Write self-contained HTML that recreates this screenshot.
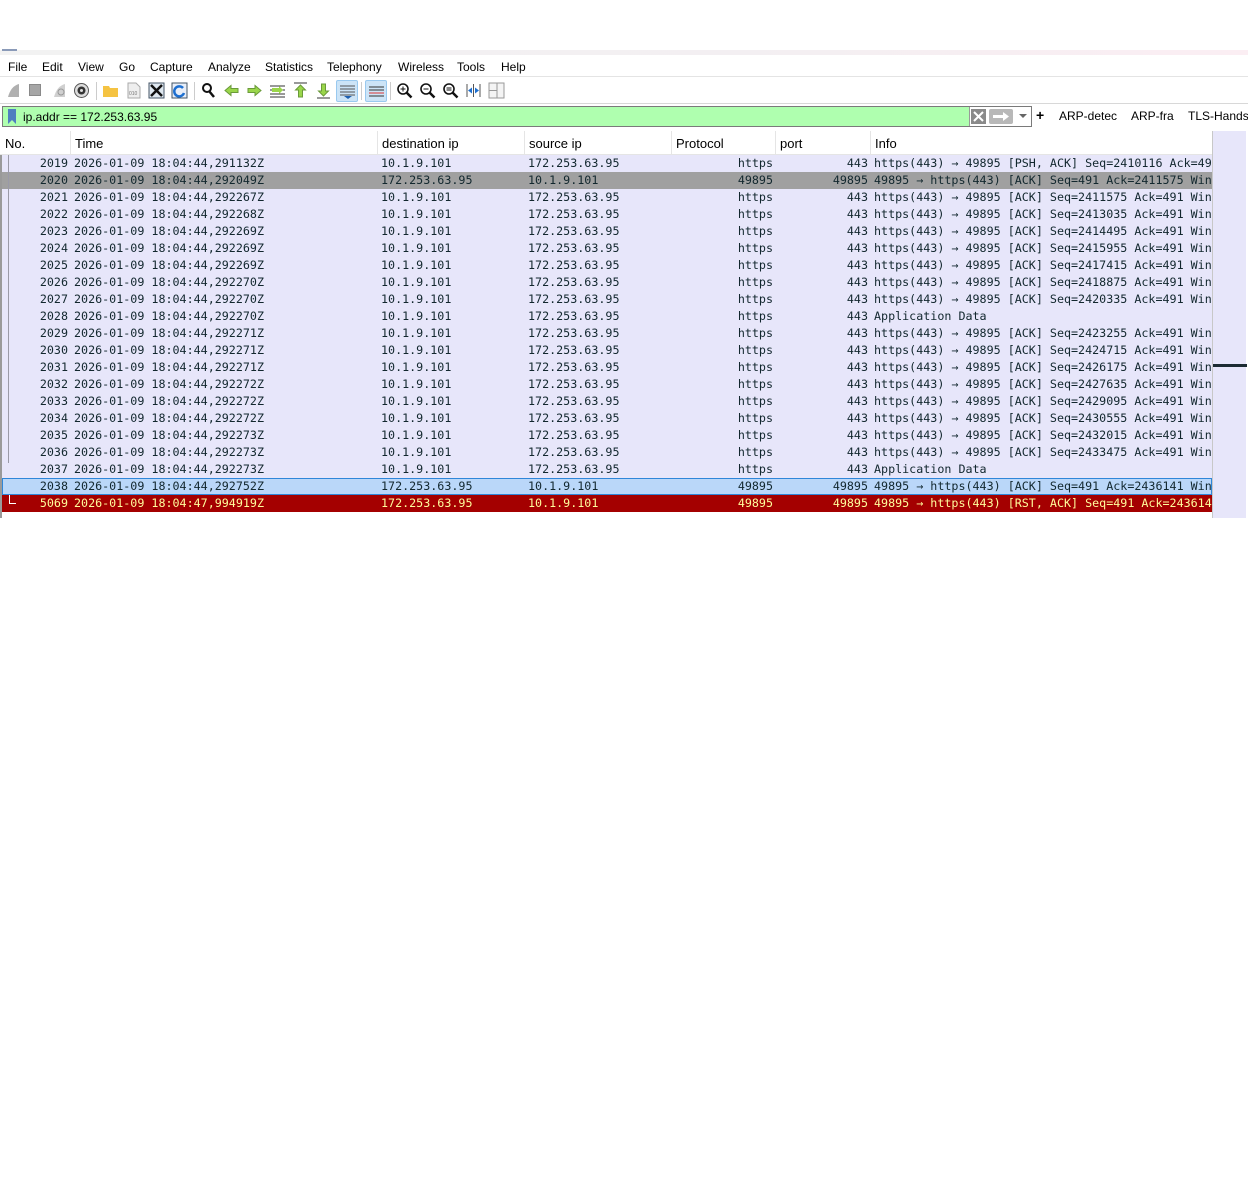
<!DOCTYPE html>
<html><head><meta charset="utf-8"><style>
*{margin:0;padding:0;box-sizing:border-box}
body{width:1248px;height:1203px;background:#fff;position:relative;overflow:hidden;font-family:"Liberation Sans","DejaVu Sans",sans-serif;font-size:12px;color:#000}
.abs{position:absolute}
#strip{left:0;top:50px;width:1248px;height:5px;background:linear-gradient(90deg,#f2f2f2,#f3eff2 60%,#fbeef3)}
#menu{left:0;top:56px;width:1248px;height:21px;background:#fff;border-bottom:1px solid #e4e4e4}
#menu span{position:absolute;top:4px;font-size:12px}
#tb{left:0;top:78px;width:1248px;height:26px;background:#fff;border-bottom:1px solid #d8d8d8}
.ic{position:absolute;top:4px;width:17px;height:17px}
.hl{position:absolute;top:2px;width:22px;height:22px;background:#cce4f7;border:1px solid #99c9ef;border-radius:2px}
#filter{left:2px;top:106px;width:1030px;height:21px;border:1px solid #7a7a7a;background:#afffaf}
#filter .t{position:absolute;left:20px;top:3px;font-size:12px}
#rb{left:1040px;top:109px;font-size:12px}
#hdr{left:0;top:131px;width:1212px;height:24px;background:#fff;border-bottom:1px solid #e5e5e5}
#hdr span{position:absolute;top:5px;font-size:13px}
.sep{position:absolute;top:0;width:1px;height:24px;background:#e5e5e5}
#list{left:0;top:155px;width:1212px;height:363px;border-left:2px solid #9a9a9a}
.r{position:absolute;left:0;width:1210px;height:17px;font-family:"DejaVu Sans Mono","Liberation Mono",monospace;font-size:11.7px;line-height:17px;white-space:nowrap;overflow:hidden;color:#12272e;background:#e7e6fa}
.r span{position:absolute;top:0;overflow:hidden}
.g{background:#a0a0a0;color:#12272e}
.s{background:#bad7f9;border:1px solid #2f86d9;line-height:15px}
.x{background:#a40000;color:#fffc9c}
#mm{left:1212px;top:131px;width:34px;height:387px;background:#e7e6fa;border-left:1px solid #c8c8c8}
</style></head><body>
<div class="abs" id="strip"></div>
<div class="abs" style="left:2px;top:49px;width:15px;height:2px;background:#8a9ab8"></div>
<div class="abs" id="menu">
<span style="left:8px">File</span><span style="left:42px">Edit</span><span style="left:78px">View</span><span style="left:119px">Go</span><span style="left:150px">Capture</span><span style="left:208px">Analyze</span><span style="left:265px">Statistics</span><span style="left:327px">Telephony</span><span style="left:398px">Wireless</span><span style="left:457px">Tools</span><span style="left:501px">Help</span>
</div>
<div class="abs" id="tb">
<svg class="ic" style="left:5px" viewBox="0 0 17 17"><path d="M3 15 L14 15 L14 2 Q6 4 3 15Z" fill="#b0b0b0"/></svg>
<div class="ic" style="left:29px;top:6px;width:12px;height:12px;background:#a6a6a6;border:1px solid #8a8a8a"></div>
<svg class="ic" style="left:51px" viewBox="0 0 17 17"><path d="M3 15 L14 15 L14 2 Q6 4 3 15Z" fill="#d0d0d0"/><circle cx="10" cy="10" r="3" fill="none" stroke="#999"/></svg>
<svg class="ic" style="left:73px" viewBox="0 0 17 17"><circle cx="8.5" cy="8.5" r="7" fill="#ddd" stroke="#555"/><circle cx="8.5" cy="8.5" r="4" fill="#333"/><circle cx="8.5" cy="8.5" r="1.5" fill="#ddd"/></svg>
<div class="abs" style="left:96px;top:4px;width:1px;height:18px;background:#ccc"></div>
<svg class="ic" style="left:102px" viewBox="0 0 17 17"><path d="M1 4h6l1 2h8v9H1z" fill="#f5c342"/></svg>
<svg class="ic" style="left:125px" viewBox="0 0 17 17"><path d="M3 1h8l4 4v11H3z" fill="#eee" stroke="#aaa"/><text x="4" y="13" font-size="5" fill="#777">010</text></svg>
<svg class="ic" style="left:148px" viewBox="0 0 17 17"><rect x="1" y="1" width="15" height="15" fill="#dfe8f0" stroke="#456"/><path d="M3 3L14 14M14 3L3 14" stroke="#111" stroke-width="2.5"/></svg>
<svg class="ic" style="left:171px" viewBox="0 0 17 17"><rect x="1" y="1" width="15" height="15" fill="#e8eef8" stroke="#456"/><path d="M12 6a5 5 0 1 0 1 5" fill="none" stroke="#1d6fd0" stroke-width="2.5"/></svg>
<div class="abs" style="left:194px;top:4px;width:1px;height:18px;background:#ccc"></div>
<svg class="ic" style="left:200px" viewBox="0 0 17 17"><circle cx="7" cy="6" r="4" fill="none" stroke="#111" stroke-width="2"/><path d="M9 9l5 6" stroke="#111" stroke-width="2.5"/></svg>
<svg class="ic" style="left:223px" viewBox="0 0 17 17"><path d="M2 8.5l6-5v3h7v4H8v3z" fill="#9ad64a" stroke="#6a9a3a"/></svg>
<svg class="ic" style="left:246px" viewBox="0 0 17 17"><path d="M15 8.5l-6-5v3H2v4h7v3z" fill="#9ad64a" stroke="#6a9a3a"/></svg>
<svg class="ic" style="left:269px" viewBox="0 0 17 17"><path d="M1 4h15M1 8h15M1 12h15M1 15h15" stroke="#333"/><path d="M3 6h7V4l4 4-4 4v-2H3z" fill="#9ad64a"/></svg>
<svg class="ic" style="left:292px" viewBox="0 0 17 17"><path d="M2 1h13" stroke="#333"/><path d="M8.5 3l5 5h-3v7h-4V8h-3z" fill="#9ad64a" stroke="#6a9a3a"/></svg>
<svg class="ic" style="left:315px" viewBox="0 0 17 17"><path d="M2 16h13" stroke="#333"/><path d="M8.5 14l5-5h-3V2h-4v7h-3z" fill="#9ad64a" stroke="#6a9a3a"/></svg>
<div class="hl" style="left:336px"><svg style="position:absolute;left:2px;top:2px" width="17" height="17" viewBox="0 0 17 17"><path d="M1 3h15M1 6h15M1 9h15M1 12h15" stroke="#555"/><path d="M5 13h8l-4 3z" fill="#1d5fb0"/></svg></div>
<div class="abs" style="left:361px;top:4px;width:1px;height:18px;background:#ccc"></div>
<div class="hl" style="left:365px"><svg style="position:absolute;left:2px;top:2px" width="17" height="17" viewBox="0 0 17 17"><path d="M1 4h15M1 7h15M1 10h15M1 13h15" stroke="#333"/><path d="M1 10h15" stroke="#d33"/></svg></div>
<div class="abs" style="left:390px;top:4px;width:1px;height:18px;background:#ccc"></div>
<svg class="ic" style="left:396px" viewBox="0 0 17 17"><circle cx="7" cy="7" r="5" fill="#fff" stroke="#111" stroke-width="1.6"/><path d="M10.5 10.5l5 5" stroke="#111" stroke-width="2.5"/><path d="M4.5 7h5M7 4.5v5" stroke="#111"/></svg>
<svg class="ic" style="left:419px" viewBox="0 0 17 17"><circle cx="7" cy="7" r="5" fill="#fff" stroke="#111" stroke-width="1.6"/><path d="M10.5 10.5l5 5" stroke="#111" stroke-width="2.5"/><path d="M4.5 7h5" stroke="#111"/></svg>
<svg class="ic" style="left:442px" viewBox="0 0 17 17"><circle cx="7" cy="7" r="5" fill="#fff" stroke="#111" stroke-width="1.6"/><path d="M10.5 10.5l5 5" stroke="#111" stroke-width="2.5"/><path d="M4.5 6h5M4.5 8h5" stroke="#111"/></svg>
<svg class="ic" style="left:465px" viewBox="0 0 17 17"><path d="M2 2v13M15 2v13M8.5 2v13" stroke="#555"/><path d="M3 8.5l4-3v6zM14 8.5l-4-3v6z" fill="#1d6fd0"/></svg>
<svg class="ic" style="left:488px" viewBox="0 0 17 17"><rect x="1" y="1" width="15" height="15" fill="#f4f4f4" stroke="#999"/><path d="M9 1v15M1 8.5h8" stroke="#999"/></svg>
</div>
<div class="abs" id="filter">
<svg class="abs" style="left:4px;top:2px" width="10" height="15" viewBox="0 0 10 15"><path d="M1 0h8v15l-4-4-4 4z" fill="#4f7fc0"/></svg>
<span class="t">ip.addr == 172.253.63.95</span>
<div class="abs" style="left:966px;top:0;width:62px;height:19px;background:#fff;border-left:1px solid #999"></div>
<svg class="abs" style="left:968px;top:2px" width="15" height="15" viewBox="0 0 15 15"><rect width="15" height="15" fill="#8a8a8a"/><path d="M3 3l9 9M12 3l-9 9" stroke="#fff" stroke-width="2"/></svg>
<svg class="abs" style="left:986px;top:2px" width="24" height="15" viewBox="0 0 24 15"><rect width="24" height="15" rx="2" fill="#b8b8b8"/><path d="M4 6h10V3l6 4.5-6 4.5V9H4z" fill="#fff"/></svg>
<svg class="abs" style="left:1016px;top:7px" width="8" height="5"><path d="M0 0h8l-4 4z" fill="#666"/></svg>
</div>
<div class="abs" id="rb"><b style="font-size:14px;font-weight:bold;position:absolute;left:-4px;top:-2px">+</b><span style="position:absolute;left:19px;white-space:nowrap">ARP-detec</span><span style="position:absolute;left:91px;white-space:nowrap">ARP-fra</span><span style="position:absolute;left:148px;white-space:nowrap">TLS-Handshake</span></div>
<div class="abs" id="hdr">
<span style="left:5px">No.</span><div class="sep" style="left:70px"></div>
<span style="left:75px">Time</span><div class="sep" style="left:377px"></div>
<span style="left:382px">destination ip</span><div class="sep" style="left:524px"></div>
<span style="left:529px">source ip</span><div class="sep" style="left:671px"></div>
<span style="left:676px">Protocol</span><div class="sep" style="left:775px"></div>
<span style="left:780px">port</span><div class="sep" style="left:870px"></div>
<span style="left:875px">Info</span>
</div>
<div class="abs" id="mm"><div class="abs" style="left:0;top:233px;width:34px;height:3px;background:#1c2b33"></div></div>
<div class="abs" id="list"></div>
<div class="abs" id="rows" style="left:2px;top:155px;width:1210px;height:363px"></div>
<div class="abs" style="left:8px;top:155px;width:1px;height:308px;background:#9a9aa8"></div>
<script>
var R=[
["2019","44,291132Z",0,"https","443","https(443) → 49895 [PSH, ACK] Seq=2410116 Ack=491 Win=1024",""],
["2020","44,292049Z",1,"49895","49895","49895 → https(443) [ACK] Seq=491 Ack=2411575 Win=1024","g"],
["2021","44,292267Z",0,"https","443","https(443) → 49895 [ACK] Seq=2411575 Ack=491 Win=1024",""],
["2022","44,292268Z",0,"https","443","https(443) → 49895 [ACK] Seq=2413035 Ack=491 Win=1024",""],
["2023","44,292269Z",0,"https","443","https(443) → 49895 [ACK] Seq=2414495 Ack=491 Win=1024",""],
["2024","44,292269Z",0,"https","443","https(443) → 49895 [ACK] Seq=2415955 Ack=491 Win=1024",""],
["2025","44,292269Z",0,"https","443","https(443) → 49895 [ACK] Seq=2417415 Ack=491 Win=1024",""],
["2026","44,292270Z",0,"https","443","https(443) → 49895 [ACK] Seq=2418875 Ack=491 Win=1024",""],
["2027","44,292270Z",0,"https","443","https(443) → 49895 [ACK] Seq=2420335 Ack=491 Win=1024",""],
["2028","44,292270Z",0,"https","443","Application Data",""],
["2029","44,292271Z",0,"https","443","https(443) → 49895 [ACK] Seq=2423255 Ack=491 Win=1024",""],
["2030","44,292271Z",0,"https","443","https(443) → 49895 [ACK] Seq=2424715 Ack=491 Win=1024",""],
["2031","44,292271Z",0,"https","443","https(443) → 49895 [ACK] Seq=2426175 Ack=491 Win=1024",""],
["2032","44,292272Z",0,"https","443","https(443) → 49895 [ACK] Seq=2427635 Ack=491 Win=1024",""],
["2033","44,292272Z",0,"https","443","https(443) → 49895 [ACK] Seq=2429095 Ack=491 Win=1024",""],
["2034","44,292272Z",0,"https","443","https(443) → 49895 [ACK] Seq=2430555 Ack=491 Win=1024",""],
["2035","44,292273Z",0,"https","443","https(443) → 49895 [ACK] Seq=2432015 Ack=491 Win=1024",""],
["2036","44,292273Z",0,"https","443","https(443) → 49895 [ACK] Seq=2433475 Ack=491 Win=1024",""],
["2037","44,292273Z",0,"https","443","Application Data",""],
["2038","44,292752Z",1,"49895","49895","49895 → https(443) [ACK] Seq=491 Ack=2436141 Win=1024","s"],
["5069","47,994919Z",1,"49895","49895","49895 → https(443) [RST, ACK] Seq=491 Ack=2436141 Win=0","x"]];
var h="";
R.forEach(function(r,i){
var d=r[2]?"172.253.63.95":"10.1.9.101",s=r[2]?"10.1.9.101":"172.253.63.95";
var o=r[6]=="s"?-1:0;
h+='<div class="r '+r[6]+'" style="top:'+(i*17)+'px">'+
'<span style="left:'+(0+o)+'px;width:66px;text-align:right">'+r[0]+'</span>'+
'<span style="left:'+(72+o)+'px">2026-01-09 18:04:'+r[1]+'</span>'+
'<span style="left:'+(379+o)+'px">'+d+'</span>'+
'<span style="left:'+(526+o)+'px">'+s+'</span>'+
'<span style="left:'+(673+o)+'px;width:98px;text-align:right">'+r[3]+'</span>'+
'<span style="left:'+(777+o)+'px;width:89px;text-align:right">'+r[4]+'</span>'+
'<span style="left:'+(872+o)+'px;width:340px">'+r[5]+'</span></div>';
});
document.getElementById("rows").innerHTML=h;
</script>
<div class="abs" style="left:9px;top:495px;width:1px;height:9px;background:#fff"></div>
<div class="abs" style="left:9px;top:503px;width:7px;height:1px;background:#fff"></div>
</body></html>
